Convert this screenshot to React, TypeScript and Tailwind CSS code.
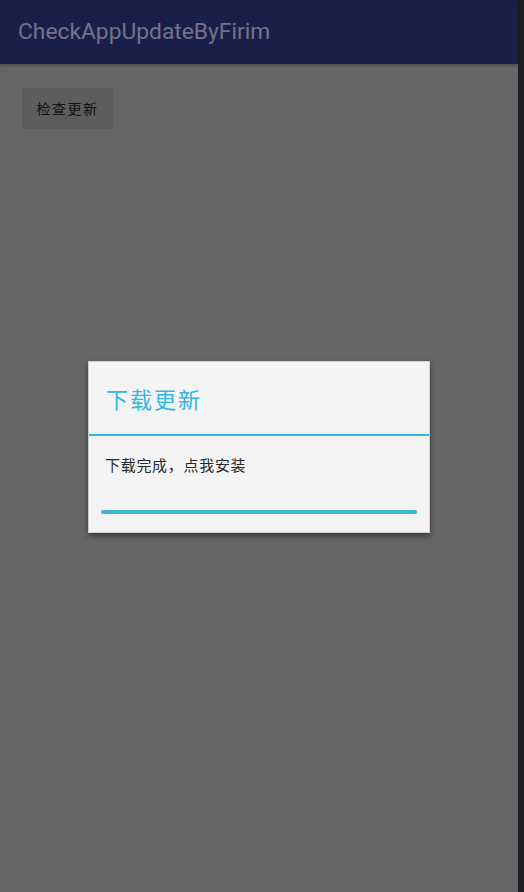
const App = () => {
    return (
        <div className="w-[524px] h-[892px] flex bg-[#1e1e22] font-['Roboto','Noto_Sans_CJK_SC',sans-serif]">
            <div className="relative w-[518px] h-full flex flex-col bg-[#666666]">
                <div className="h-16 bg-[#1a1f4a] flex items-center pl-[18px] shadow-[0_2px_3px_rgba(0,0,0,0.25)]">
                    <div className="text-[22.8px] text-[#727486]">CheckAppUpdateByFirim</div>
                </div>
                <div className="pt-6 pl-[22px]">
                    <div className="w-[91px] h-[41px] rounded-[2px] bg-[#5d5d5d] flex items-center justify-center text-[14px] tracking-[1.5px] text-[#111111] font-['Noto_Sans_CJK_SC',sans-serif]">
                        检查更新
                    </div>
                </div>

                <div className="absolute inset-0 flex items-center justify-center">
                    <div className="w-[342px] h-[172px] mt-[2px] bg-[#f4f4f4] border border-[#d0d0d0] shadow-[0_3px_6px_rgba(0,0,0,0.45)] flex flex-col font-['Noto_Sans_CJK_SC',sans-serif]">
                        <div className="h-[72px] flex items-center pl-[17px] text-[22px] tracking-[2px] text-[#33b5e5]">下载更新</div>
                        <div className="h-[2px] bg-[#33b5e5]"></div>
                        <div className="pl-4 pt-[19px] text-[15px] tracking-[0.7px] text-[#282828] leading-[20px]">下载完成，点我安装</div>
                        <div className="mx-[12px] mt-[35px] h-[4px] rounded-full bg-[#3db4e0]"></div>
                    </div>
                </div>
            </div>
            <div className="w-[6px]"></div>
        </div>
    );
};

export default App;
